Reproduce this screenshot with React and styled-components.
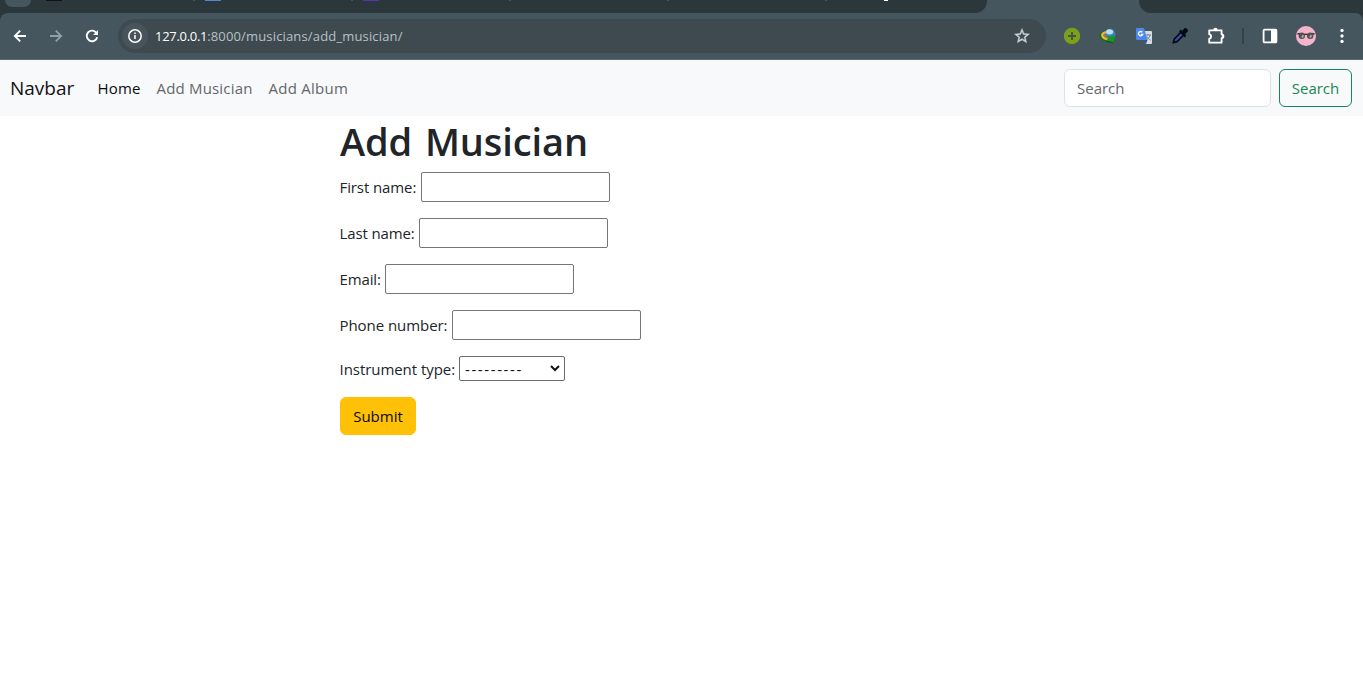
import React from "react";
import styled, { createGlobalStyle } from "styled-components";

const GlobalStyle = createGlobalStyle`
  *, *::before, *::after { box-sizing: border-box; }
  body {
    margin: 0;
    background: #fff;
    color: #212529;
    font-family: "Open Sans", "Noto Sans", sans-serif;
    font-size: 15px;
    line-height: 24px;
    overflow: hidden;
  }
`;

const TabStrip = styled.div`
  display: flex;
  height: 13px;
  background: #45565e;
`;

const TabGroup = styled.div`
  position: relative;
  flex: ${(p) => (p.$width ? `0 0 ${p.$width}px` : "1")};
  margin-left: ${(p) => p.$gap || 0}px;
  background: #2c373c;
  border-radius: ${(p) => p.$radius};
`;

const TabMark = styled.span`
  position: absolute;
  top: 0;
  left: ${(p) => p.$x}px;
  width: ${(p) => p.$w}px;
  height: ${(p) => p.$h || 1}px;
  background: ${(p) => p.$color};
  border-radius: ${(p) => p.$r || "0"};
`;

const ToolbarBack = styled.div`
  background: #2c373c;
`;

const Toolbar = styled.div`
  display: flex;
  align-items: center;
  height: 47px;
  padding: 0 3px 0 10px;
  background: #45565e;
  border-bottom: 1px solid #5c6b72;
  border-radius: 8px 8px 0 0;
`;

const NavButtons = styled.div`
  display: flex;
  gap: 16px;
  svg { display: block; }
`;

const AddressBar = styled.div`
  display: flex;
  align-items: center;
  width: 928px;
  height: 34px;
  margin-left: 16px;
  padding: 0 15px 0 4px;
  border-radius: 17px;
  background: #3f4a50;
`;

const SiteInfo = styled.span`
  display: grid;
  place-items: center;
  width: 26px;
  height: 26px;
  border-radius: 50%;
  background: #48545b;
`;

const Url = styled.span`
  flex: 1;
  margin-left: 7px;
  color: #b9c0c4;
  font-size: 13px;
  letter-spacing: 0.16px;
  white-space: nowrap;
`;

const Host = styled.span`
  color: #fff;
  letter-spacing: -0.3px;
`;

const Extensions = styled.div`
  display: grid;
  grid-template-columns: repeat(5, 36px) 18px repeat(3, 36px);
  place-items: center;
  margin-left: 8px;
  svg { display: block; }
`;

const Divider = styled.span`
  width: 2px;
  height: 16px;
  background: #34434b;
`;

const Navbar = styled.nav`
  display: flex;
  align-items: center;
  height: 56px;
  padding: 0 11px 0 10px;
  background: #f8f9fa;
`;

const Brand = styled.a`
  width: 64px;
  margin-right: 23.5px;
  color: #111315;
  font-size: 19px;
  line-height: 30px;
  white-space: nowrap;
`;

const NavLink = styled.a`
  width: ${(p) => p.$width}px;
  margin-right: 16px;
  color: ${(p) => (p.$active ? "#0b0c0d" : "#64676a")};
  letter-spacing: ${(p) => p.$spacing}px;
  white-space: nowrap;
`;

const SearchForm = styled.form`
  display: flex;
  gap: 8px;
  margin-left: auto;
`;

const SearchInput = styled.input`
  width: 207px;
  height: 38px;
  padding: 6px 12px;
  border: 1px solid #dee2e6;
  border-radius: 6px;
  background: #fff;
  font: inherit;
  outline: none;
  &::placeholder { color: #64686c; opacity: 1; }
`;

const Button = styled.button`
  width: ${(p) => p.$width}px;
  height: 38px;
  padding: 0;
  border: 1px solid ${(p) => (p.$solid ? "#ffc107" : "#198754")};
  border-radius: 6px;
  background: ${(p) => (p.$solid ? "#ffc107" : "transparent")};
  color: ${(p) => (p.$solid ? "#0a0a0a" : "#198754")};
  font: inherit;
`;

const Content = styled.main`
  width: 683px;
  margin: 0 auto;
`;

const Title = styled.h1`
  margin: 0 0 8px;
  padding-top: 1px;
  height: 48px;
  font-size: 38px;
  font-weight: 600;
  line-height: 48px;
  letter-spacing: -0.1px;
  word-spacing: 3px;
`;

const Field = styled.div`
  display: flex;
  align-items: center;
  height: ${(p) => p.$height || 30}px;
  margin-bottom: 16px;
`;

const Label = styled.label`
  width: ${(p) => p.$width}px;
  letter-spacing: ${(p) => p.$spacing}px;
  text-indent: -0.5px;
  white-space: nowrap;
`;

const TextInput = styled.input`
  width: 189px;
  height: 30px;
  padding: 1px 2px;
  border: 1px solid #767676;
  border-radius: 2px;
  background: #fff;
  font: inherit;
`;

const SelectBox = styled.div`
  display: flex;
  align-items: center;
  justify-content: space-between;
  width: 106px;
  height: 25px;
  padding: 0 4px 0 5px;
  border: 1px solid #6c6c6c;
  border-radius: 2px;
  color: #111;
  letter-spacing: 1.6px;
  svg { position: relative; top: -1px; }
`;

const Icon = ({ size = 20, children, box = "0 0 24 24", ...rest }) => (
  <svg width={size} height={size} viewBox={box} fill="none" {...rest}>{children}</svg>
);

const BackIcon = () => (
  <Icon box="0 0 20 20" stroke="#fff" strokeWidth="1.8"><path d="M16 10H5M10.2 4.6 4.8 10l5.4 5.4" /></Icon>
);
const ForwardIcon = () => (
  <Icon box="0 0 20 20" stroke="#93a0a6" strokeWidth="1.8"><path d="M4 10h11M9.8 4.6l5.4 5.4-5.4 5.4" /></Icon>
);
const ReloadIcon = () => (
  <Icon box="0 0 20 20" stroke="#fff" strokeWidth="1.9">
    <path d="M14.6 7.2A5.3 5.3 0 1 0 15.2 11.2" />
    <path d="M16 4v5h-5z" fill="#fff" stroke="none" />
  </Icon>
);
const InfoIcon = () => (
  <Icon size={16} box="0 0 16 16">
    <circle cx="8" cy="8" r="6.2" stroke="#fff" strokeWidth="1.5" />
    <path d="M8 7.1v4M8 4.4v1.5" stroke="#fff" strokeWidth="1.5" />
  </Icon>
);
const StarIcon = () => (
  <Icon size={18}>
    <path d="M22 9.24l-7.19-.62L12 2 9.19 8.63 2 9.24l5.46 4.73L5.82 21 12 17.27 18.18 21l-1.63-7.03L22 9.24zM12 15.4l-3.76 2.27 1-4.28-3.32-2.88 4.38-.38L12 6.1l1.71 4.04 4.38.38-3.32 2.88 1 4.28L12 15.4z" fill="#cbd1d4" stroke="#cbd1d4" strokeWidth="0.5" />
  </Icon>
);
const PlusBadge = () => (
  <Icon size={18} box="0 0 18 18">
    <circle cx="9" cy="9" r="8.2" fill="#7da01b" />
    <path d="M9 5v8M5 9h8" stroke="#405a3a" strokeWidth="2" />
  </Icon>
);
const GlobeArrow = () => (
  <Icon size={18} box="0 0 18 18">
    <circle cx="11" cy="7.2" r="5.4" fill="#3f82c8" />
    <ellipse cx="10.6" cy="4.8" rx="3.6" ry="2.6" fill="#b9dcf3" />
    <path d="M6.5 4.5C3 5.5.8 7.3 1.4 9.4c.7 2.6 4.4 4.4 7.6 4.8" stroke="#1c6b2a" strokeWidth="2" />
    <path d="M6.8 5C4.2 6 2.8 7.4 3.4 9c.6 1.6 2.9 2.8 5 3.2" stroke="#e8bd28" strokeWidth="2.2" />
    <path d="M6 7.4c-.6 1.4.2 2.8 2.4 3.4" stroke="#dc6a2c" strokeWidth="1.4" />
    <path d="M8.2 9.4 17 8.2 14 15.8 12.2 14.4 8.4 15 6.8 13.4 9.8 12z" fill="#149a22" />
    <path d="M7 14.2 11.5 15.2 13.8 15.6" stroke="#114f1c" />
  </Icon>
);
const TranslateIcon = () => (
  <Icon size={18} box="0 0 18 18">
    <path d="M7 4h9q1 0 1 1v11q0 1-1 1h-5z" fill="#d9dde1" />
    <path d="M10.5 8h5.5M13 7v1M15 8c-.5 2.5-2 4-4 5M12 9.5c.8 1.7 2 3 3.6 3.6" stroke="#6f8790" />
    <path d="M2 1h7l3.5 12H2q-1 0-1-1V2q0-1 1-1z" fill="#4b87ed" />
    <path d="M9 13h3.5L11 17z" fill="#2854ad" />
    <path d="M7.3 5.2A2.2 2.2 0 1 0 7.8 7.3H5.8" stroke="#fff" strokeWidth="1.3" />
  </Icon>
);
const PickerIcon = () => (
  <Icon size={18} box="0 0 18 18">
    <path d="M10 5 3.4 12 2.2 15.8l3.8-1.2L12.8 8z" fill="#3c4b9e" stroke="#050a18" strokeWidth="1.7" strokeLinejoin="round" />
    <path d="m8.5 4.2 1.2-1 1.6 1.2L13 2.2c1-1 2.2-.8 2.9 0s.8 1.9-.1 2.8L13.6 7l1.2 1.8-1.2 1.1z" fill="#030713" stroke="#030713" strokeLinejoin="round" />
  </Icon>
);
const PuzzleIcon = () => (
  <Icon size={20} box="0 0 20 20">
    <path d="M3.2 4.3h12.4v4.1c2.4 0 2.4 3.8 0 3.8v4.5H3.2v-4c2.5-.2 2.5-4.3 0-4.4z" stroke="#fff" strokeWidth="1.8" strokeLinejoin="round" />
    <path d="M7.2 4.2a2.2 2.4 0 0 1 4.4 0zM15.8 8a2.3 2.3 0 0 1 0 4.6z" fill="#fff" />
  </Icon>
);
const PanelIcon = () => (
  <Icon size={18} box="0 0 18 18">
    <rect x="2.6" y="2.6" width="12.8" height="12.8" rx="1" stroke="#fff" strokeWidth="1.8" />
    <path d="M10 2h5q1 0 1 1v12q0 1-1 1h-5z" fill="#fff" />
  </Icon>
);
const Avatar = () => (
  <Icon size={20} box="0 0 20 20">
    <circle cx="10" cy="10" r="10" fill="#f6b4cb" />
    <circle cx="5.8" cy="9.8" r="3.2" fill="#565155" />
    <circle cx="14.2" cy="9.8" r="3.2" fill="#565155" />
    <path d="M1.4 8.2 3.6 7.4M8.4 8.6q1.6-.8 3.2 0M18.6 8.2l-2.2-.8" stroke="#2b282c" strokeWidth="1.3" />
    <path d="M6 11.4 7.4 9.2M14 11.4l1.4-2.2" stroke="#b3abaf" strokeWidth="1.8" />
  </Icon>
);
const MoreIcon = () => (
  <Icon size={18} box="0 0 18 18">
    <g fill="#fff"><circle cx="9" cy="3.4" r="1.65" /><circle cx="9" cy="9" r="1.65" /><circle cx="9" cy="14.4" r="1.65" /></g>
  </Icon>
);
const Chevron = () => (
  <Icon size={10} box="0 0 10 10" stroke="#111" strokeWidth="2"><path d="m1 3 4 4 4-4" /></Icon>
);

const textFields = [
  { label: "First name:", width: 81, spacing: -0.1 },
  { label: "Last name:", width: 79, spacing: -0.12 },
  { label: "Email:", width: 45, spacing: -0.12 },
  { label: "Phone number:", width: 112, spacing: -0.06 },
];

export default function App() {
  return (
    <>
      <GlobalStyle />
      <TabStrip>
        <TabGroup $width={987} $radius="0 0 12px 0">
          <TabMark $x={5} $w={26} $h={7} $color="#45565e" $r="0 0 9px 9px" />
          <TabMark $x={46} $w={16} $color="#11151a" />
          <TabMark $x={193} $w={2} $color="#46545b" />
          <TabMark $x={205} $w={16} $color="#5387cf" />
          <TabMark $x={351} $w={2} $color="#46545b" />
          <TabMark $x={363} $w={16} $color="#5c2fb8" />
          <TabMark $x={509} $w={2} $color="#46545b" />
          <TabMark $x={667} $w={2} $color="#46545b" />
          <TabMark $x={825} $w={2} $color="#46545b" />
          <TabMark $x={884} $w={4} $color="#fff" />
        </TabGroup>
        <TabGroup $gap={152} $radius="0 0 0 12px" />
      </TabStrip>
      <ToolbarBack>
        <Toolbar>
          <NavButtons><BackIcon /><ForwardIcon /><ReloadIcon /></NavButtons>
          <AddressBar>
            <SiteInfo><InfoIcon /></SiteInfo>
            <Url><Host>127.0.0.1</Host>:8000/musicians/add_musician/</Url>
            <StarIcon />
          </AddressBar>
          <Extensions>
            <PlusBadge /><GlobeArrow /><TranslateIcon /><PickerIcon /><PuzzleIcon />
            <Divider />
            <PanelIcon /><Avatar /><MoreIcon />
          </Extensions>
        </Toolbar>
      </ToolbarBack>
      <Navbar>
        <Brand>Navbar</Brand>
        <NavLink $active $width={43} $spacing={0.2}>Home</NavLink>
        <NavLink $width={96} $spacing={0.18}>Add Musician</NavLink>
        <NavLink $width={81} $spacing={0.25}>Add Album</NavLink>
        <SearchForm>
          <SearchInput placeholder="Search" />
          <Button type="button" $width={73}>Search</Button>
        </SearchForm>
      </Navbar>
      <Content>
        <Title>Add Musician</Title>
        {textFields.map((f) => (
          <Field key={f.label}>
            <Label $width={f.width} $spacing={f.spacing}>{f.label}</Label>
            <TextInput />
          </Field>
        ))}
        <Field $height={25}>
          <Label $width={119} $spacing={-0.05}>Instrument type:</Label>
          <SelectBox><span>---------</span><Chevron /></SelectBox>
        </Field>
        <Button type="button" $solid $width={76}>Submit</Button>
      </Content>
    </>
  );
}
